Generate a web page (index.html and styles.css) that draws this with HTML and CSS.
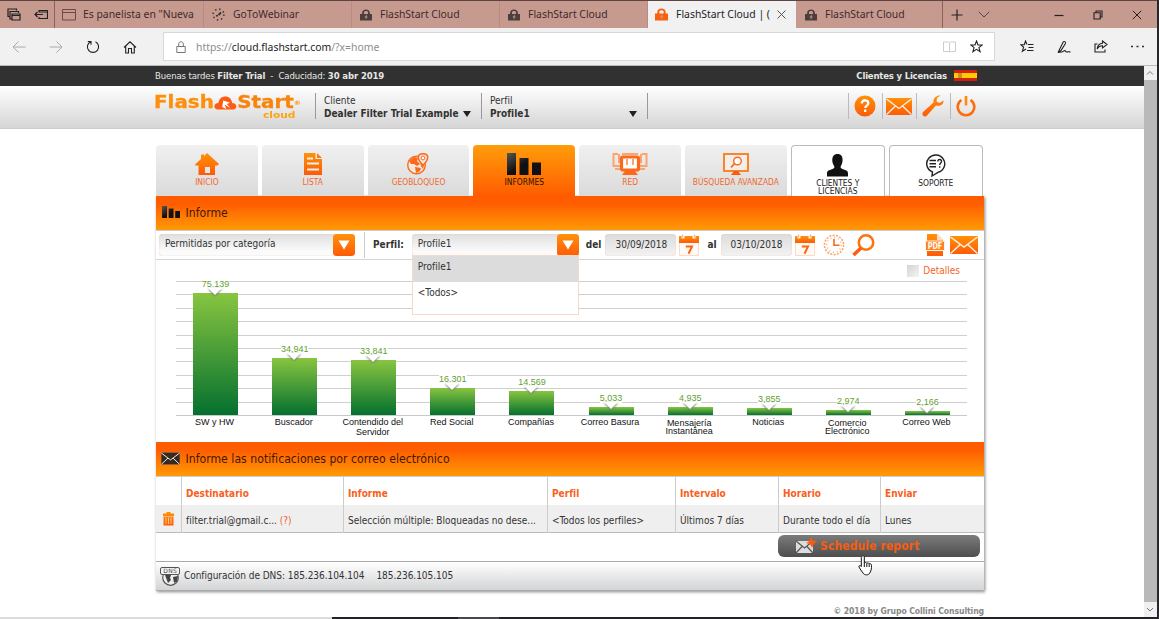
FILE: index.html
```html
<!DOCTYPE html>
<html lang="es">
<head>
  <meta charset="utf-8">
  <title>FlashStart Cloud</title>
  <link rel="stylesheet" href="styles.css">
</head>
<body>
<svg class="defs" width="0" height="0">
  <defs>
    <linearGradient id="og" x1="0" y1="0" x2="0" y2="1"><stop offset="0" stop-color="#ff9208"/><stop offset="1" stop-color="#fd5b08"/></linearGradient>
    <linearGradient id="bk" x1="0" y1="0" x2="1" y2="1"><stop offset="0" stop-color="#555"/><stop offset=".5" stop-color="#111"/><stop offset="1" stop-color="#111"/></linearGradient>
    <symbol id="lock" viewBox="0 0 13 13"><path d="M2.3 5.5V4.2C2.3 1.8 4 .5 6.5.5s4.2 1.3 4.2 3.7v1.3H13V12.500H0v-7zM4.300 5.500h4.400V4.200C8.700 3 8 2.300 6.500 2.300S4.300 3 4.300 4.200z"/><path d="M7.500 6 4.800 9h1.600l-.5 2.500L8.500 8.500H7z" class="bolt"/></symbol>
    <symbol id="mail" viewBox="0 0 26 17"><rect width="26" height="17" rx=".5"/><path d="M.5 1 13 10.500 25.500 1M.5 16.500 9.500 8M25.500 16.500 16.500 8" fill="none" class="fold"/></symbol>
    <symbol id="cal" viewBox="0 0 20 22"><path d="M0 2h2.500v2.500h3V2h8v2.500h3V2H20v7H0z" fill="url(#og)"/><path d="M3.500.5v3M15.500.5v3" stroke="#ffb98e" stroke-width="1.500"/><path d="M.5 9v12.500h19V9" fill="#fffaf6" stroke="#ffd9c2"/><path d="M6.800 12.500h6.200L9.500 19.800" fill="none" stroke="#fb6410" stroke-width="2"/></symbol>
    <symbol id="drop" viewBox="0 0 22 22"><rect width="22" height="22" rx="3.500" fill="url(#og)"/><path d="M5.500 6.500h11L11 15.500z" fill="#fff"/></symbol>
  </defs>
</svg>

<div class="browser">
  <div class="tabbar">
    <div class="tabtools">
      <svg width="14" height="13" viewBox="0 0 14 13"><path d="M2.500 8.500H1v-7.500h8.500v1.500M4.500 11H3V3.500h8.500V5M5 6h8v6H5zM5 7.500h8" fill="none" stroke="#222" stroke-width="1.200"/></svg>
      <svg width="14" height="11" viewBox="0 0 14 11"><path d="M5 3V1.500h8.500v8H5V8M4.500 3h9M9 5.500H1M3.500 3 1 5.500 3.500 8" fill="none" stroke="#222" stroke-width="1.200"/></svg>
    </div>
    <div class="tab first">
      <svg width="14" height="12" viewBox="0 0 14 12"><path d="M.5.5h13v10.500H.5zM.5 3.500h13" fill="none" stroke="#6a4a45"/></svg>
      <span>Es panelista en "Nueva</span>
    </div>
    <div class="tab">
      <svg width="13" height="13" viewBox="0 0 13 13"><path d="M6.500 7 9 4.500M6 7.500l-2 .5" stroke="#333" stroke-width="1.800"/><circle cx="6.500" cy="6.500" r="5.400" fill="none" stroke="#4a3a38" stroke-width="1.600" stroke-dasharray="1.500 2.740"/></svg>
      <span>GoToWebinar</span>
    </div>
    <div class="tab"><svg class="lk" width="12" height="12"><use href="#lock"/></svg><span>FlashStart Cloud</span></div>
    <div class="tab"><svg class="lk" width="12" height="12"><use href="#lock"/></svg><span>FlashStart Cloud</span></div>
    <div class="tab active"><svg class="lk" width="13" height="13"><use href="#lock"/></svg><span>FlashStart Cloud | (</span>
      <svg class="x" width="9" height="9" viewBox="0 0 9 9"><path d="m.5.5 8 8m0-8-8 8" stroke="#555"/></svg></div>
    <div class="tab last"><svg class="lk" width="12" height="12"><use href="#lock"/></svg><span>FlashStart Cloud</span></div>
    <div class="newtab">
      <svg width="12" height="12" viewBox="0 0 12 12"><path d="M6 .5v11M.5 6h11" stroke="#222" stroke-width="1.200"/></svg>
      <svg width="12" height="7" viewBox="0 0 12 7"><path d="m.8.8 5.200 5.200 5.200-5.200" fill="none" stroke="#5b403c"/></svg>
    </div>
    <div class="winbtns">
      <svg width="10" height="10" viewBox="0 0 10 10"><path d="M.5 5.500h9" stroke="#222" stroke-width="1.200"/></svg>
      <svg width="10" height="10" viewBox="0 0 10 10"><path d="M1 2.800h6.200V9H1zM3 2.500V1h6v6H7.500" fill="none" stroke="#222" stroke-width="1.100"/></svg>
      <svg width="10" height="10" viewBox="0 0 10 10"><path d="m.8.8 8.400 8.400m0-8.400L.8 9.200" stroke="#222"/></svg>
    </div>
  </div>

  <div class="navbar">
    <div class="navbtns">
      <svg width="14" height="14" viewBox="0 0 14 14"><path d="M13.500 7H1M6.500 1.500 1 7l5.500 5.500" fill="none" stroke="#aaa"/></svg>
      <svg width="14" height="14" viewBox="0 0 14 14"><path d="M.5 7H13M7.500 1.500 13 7l-5.500 5.500" fill="none" stroke="#aaa"/></svg>
      <svg width="14" height="14" viewBox="0 0 14 14"><path d="M9.500 1.800A5.600 5.600 0 1 1 4.500 1.800M1.800 1.500h3.200v3.300" fill="none" stroke="#222" stroke-width="1.100"/></svg>
      <svg width="14" height="14" viewBox="0 0 14 14"><path d="M1 7.500 7 1.800l6 5.700M2.700 6v7h2.800V8.500h3V13h2.800V6" fill="none" stroke="#222" stroke-width="1.100"/></svg>
    </div>
    <div class="address">
      <svg width="10" height="12" viewBox="0 0 10 12"><path d="M.8 5.500h8.400v6H.8zM2.700 5.500v-2.500C2.700 0 7.300 0 7.300 3v2.500" fill="none" stroke="#777"/></svg>
      <span class="url">https://<b>cloud.flashstart.com</b>/?x=home</span>
      <svg class="book" width="13" height="12" viewBox="0 0 13 12"><path d="M.5 1h5l1 .8 1-.8h5v9.500h-5l-1 .8-1-.8h-5zM6.500 2v9" fill="none" stroke="#ccc"/></svg>
      <svg width="13" height="13" viewBox="0 0 13 13"><path d="m6.500 1 1.500 4h4.200L8.900 7.600l1.200 4.100-3.600-2.400-3.600 2.400 1.200-4.100L.8 5H5z" fill="none" stroke="#222" stroke-width="1.100"/></svg>
    </div>
    <div class="navtools">
      <svg width="14" height="13" viewBox="0 0 14 13"><path d="M8 4.500h5.500M8.500 7.500h5M7 10.500h6.500M7 4.500 5.500 1 4.300 4.700H.8l2.800 2.500-1.200 4L6 9" fill="none" stroke="#222" stroke-width="1.100"/></svg>
      <svg width="14" height="14" viewBox="0 0 14 14"><path d="M1 12.500 6 2.500c1-2 3.300-.8 2.300 1.300L4 10.500 1 12.500l3.500-.5c2 .500 2.500-2.500 4-1 .5 1.500 1.500 1 2.500.8.800-.200 1.500.2 2.500.2" fill="none" stroke="#222" stroke-width="1.100"/></svg>
      <svg width="14" height="13" viewBox="0 0 14 13"><path d="M3.500 4H1v8h10V9.500M8.500 1l4.500 3.500L8.500 8V5.800C6 5.800 4.500 6.500 3.200 9 3.500 5.500 5.500 3.300 8.500 3.200z" fill="none" stroke="#222" stroke-width="1.100"/></svg>
      <svg width="13" height="3" viewBox="0 0 13 3"><path d="M0 1.500h2M5.500 1.500h2M11 1.500h2" stroke="#333" stroke-width="1.400"/></svg>
    </div>
  </div>

  <div class="viewport">
    <div class="page">
      <div class="topline">
        <div class="wrap">
          <span class="welcome">Buenas tardes <b>Filter Trial</b> &nbsp;-&nbsp; Caducidad: <b>30 abr 2019</b></span>
          <b class="cl">Clientes y Licencias</b>
          <span class="flag"><i></i></span>
        </div>
      </div>
      <div class="header">
        <div class="wrap">
          <div class="logo">
            <div class="name"><span>Flash</span><svg width="20" height="14" viewBox="0 0 22 14" preserveAspectRatio="none"><path d="M4 13.500C-1 13 0 7 4.500 7 5 2.500 8 .500 11 .500c3.500 0 6 2.500 6.300 6.500C22 7 23 13 18 13.500z" fill="#ff5a12"/><path d="M9 4.500 15.500 6.800 12.500 8l3 4-5.300-3.500L12 13 8 11z" fill="#fff"/></svg><span class="start">Start</span><sup>®</sup></div>
            <div class="sub"><span>cloud</span></div>
          </div>
          <div class="pick client"><span>Cliente</span><b>Dealer Filter Trial Example</b><i></i></div>
          <div class="pick profile"><span>Perfil</span><b>Profile1</b><i></i></div>
          <div class="hicons">
            <div><svg width="22" height="22" viewBox="0 0 22 22"><circle cx="11" cy="11" r="10.500" fill="url(#og)"/><path d="M7.800 8.500c0-4.500 6.500-4 6.500-.3 0 2.500-3 2.300-3 4.800M11.200 14.600v2.400" fill="none" stroke="#fff" stroke-width="2.300"/></svg></div>
            <div><svg class="mail" width="26" height="17"><use href="#mail"/></svg></div>
            <div><svg width="22" height="22" viewBox="0 0 22 22"><path d="M21.500 5.500 17.500 8 14.500 6.500 15 3 18.500.5C15 0 11 2.500 11.500 7.500L1 17c-2 2.500 1 6 3.500 4L14 10.500c4.500 1 8-1.500 7.500-5z" fill="url(#og)"/></svg></div>
            <div><svg width="20" height="22" viewBox="0 0 20 22"><path d="M5.500 5a8.300 8.300 0 1 0 9 0" fill="none" stroke="#fd6d0b" stroke-width="2.600"/><path d="M8.700 1h2.600v9.500H8.700z" fill="#ff8a10"/></svg></div>
          </div>
        </div>
      </div>

      <div class="main">
        <div class="menu">
          <div class="item"><svg width="24" height="23" viewBox="0 0 24 23"><path d="M12 0 24 11l-1.500 1.500H20V22H3.500v-9.500H0L.5 11 6 6V1.500h3V3zM10 14v6h5v-6z" fill="url(#og)" fill-rule="evenodd"/></svg><span>INICIO</span></div>
          <div class="item"><svg width="18" height="23" viewBox="0 0 18 23"><path d="M0 0h11.500v6H18v16H0z" fill="url(#og)"/><path d="m13 0 5 5h-5z" fill="#fd7a1a"/><path d="M3 5.500h6M3 10.500h12M3 16.500h12" stroke="#eee" stroke-width="2"/></svg><span>LISTA</span></div>
          <div class="item"><svg width="22" height="23" viewBox="0 0 22 23"><circle cx="9.500" cy="12" r="8.800" fill="#f3e7df" stroke="#fb6a1c" stroke-width="1.400"/><path d="M2 8 7 4l4 1-1 3 3 3-3 2-3-2H4zM8 14l6 1-1 3-4 2zM13 10l4 2-1 4-2-3z" fill="#fb6a1c"/><path d="M16 .7c6 0 6.500 5 0 11.500C9.500 5.700 10 .700 16 .700z" fill="#f3e7df" stroke="#fb6a1c" stroke-width="1.500"/><circle cx="16" cy="5" r="1.900" fill="#fff" stroke="#fb6a1c"/></svg><span>GEOBLOQUEO</span></div>
          <div class="item on"><svg width="34" height="23" viewBox="0 0 34 23"><path d="M0 0h9v22H0zM12.500 5h9v17h-9zM25 9.500h9V22h-9z" fill="url(#bk)"/></svg><span>INFORMES</span></div>
          <div class="item"><svg width="36" height="23" viewBox="0 0 36 23"><path d="M6 1H1.500v12H8M30 1h4.500v12H28M7 1v9M29 1v9M3 16h7M26 16h7M10 1h16" fill="none" stroke="#fba46e" stroke-width="2"/><rect x="9.500" y="4" width="17" height="13" rx="1.500" fill="#fff" stroke="#fb6a1c" stroke-width="3.200"/><path d="M15 6v6M21 6v6" stroke="#fba46e" stroke-width="2"/><path d="M13 18h10l3 4H10z" fill="#fb6a1c"/></svg><span>RED</span></div>
          <div class="item"><svg width="26" height="23" viewBox="0 0 26 23"><rect x="1" y="1" width="24" height="17" fill="#f3eee9" stroke="#fb8426" stroke-width="2"/><circle cx="14.500" cy="8" r="3.800" fill="#fff" stroke="#fb6a1c" stroke-width="1.400"/><path d="m11.500 10.500-3.500 4" stroke="#fb6a1c" stroke-width="1.800"/><path d="M11 18h4l3 4H8z" fill="#fb5a10"/></svg><span>BÚSQUEDA AVANZADA</span></div>
          <div class="item white"><svg width="21" height="24" viewBox="0 0 21 24"><path d="M10.500 0C14 0 16 2.500 15.500 7 15.300 10 14 11 13.500 13c.5 3 7.500 2 7.500 6v3.500H0V19c0-4 7-3 7.500-6C7 11 5.500 10 5.300 7 5 2.500 7 0 10.500 0z" fill="#111"/></svg><span>CLIENTES Y LICENCIAS</span></div>
          <div class="item white"><svg width="21" height="24" viewBox="0 0 21 24"><path d="M7.500 18A9 8.800 0 1 1 13 18.300L7 22z" fill="#fff" stroke="#222" stroke-width="1.400"/><path d="M4.500 6.500H11M4.500 9.700H11M4.500 12.800H11M12.800 7.500c0-3 4-2.500 3.700 0-.2 1.500-1.800 1.500-1.800 3.500M14.700 12.300v1.500" fill="none" stroke="#222" stroke-width="1.400"/></svg><span>SOPORTE</span></div>
        </div>

        <div class="panel">
          <div class="title"><svg width="18" height="13" viewBox="0 0 18 13"><path d="M0 0h5v12H0zM6.700 2.500h4.800V12H6.700zM13.200 5H18v7h-4.800z" fill="url(#bk)"/></svg><span>Informe</span></div>

          <div class="filters">
            <div class="select category"><span>Permitidas por categoría</span><svg width="22" height="22"><use href="#drop"/></svg></div>
            <div class="fprofile">
              <b>Perfil:</b>
              <div class="select prof"><span>Profile1</span><svg width="22" height="22"><use href="#drop"/></svg>
                <ul class="options"><li class="sel">Profile1</li><li>&lt;Todos&gt;</li></ul>
              </div>
            </div>
            <b class="del">del</b><span class="date">30/09/2018</span><svg width="20" height="22"><use href="#cal"/></svg>
            <b class="al">al</b><span class="date">03/10/2018</span><svg width="20" height="22"><use href="#cal"/></svg>
            <svg class="clock" width="22" height="22" viewBox="0 0 22 22"><circle cx="11" cy="11" r="9.600" fill="none" stroke="#fca468" stroke-width="1.600" stroke-dasharray="2 1.350"/><circle cx="11" cy="11" r="7.300" fill="none" stroke="#fcb283" stroke-width="1.500" stroke-dasharray="1 2.820"/><path d="M11 5v6.200h5.500" fill="none" stroke="#f86a14" stroke-width="1.600"/></svg>
            <svg class="lens" width="23" height="22" viewBox="0 0 23 22"><circle cx="14" cy="8.500" r="7.200" fill="#fff" stroke="#fc7410" stroke-width="2.600"/><path d="m9 14-7.500 7" stroke="#fb5f0c" stroke-width="3.600"/></svg>
            <svg class="pdf" width="20" height="22" viewBox="0 0 20 22"><path d="M2 0h10l6 6v16H2z" fill="url(#og)"/><path d="M12 0v6h6z" fill="#ffe0c4"/><rect x=".5" y="7" width="19" height="9.500" fill="#ff8421" stroke="#fff2e6"/><text x="2.700" y="15" textLength="14.500" lengthAdjust="spacingAndGlyphs">PDF</text></svg>
            <svg class="mail" width="28" height="18" viewBox="0 0 26 17" preserveAspectRatio="none"><use href="#mail" width="26" height="17"/></svg>
          </div>

          <div class="chart">
            <label class="details"><i></i>Detalles</label>
            <div class="plot">
              <div class="col"><em>75.139</em><div class="bar" style="height:122px"></div></div>
              <div class="col"><em>34,941</em><div class="bar" style="height:57px"></div></div>
              <div class="col"><em>33,841</em><div class="bar" style="height:55px"></div></div>
              <div class="col"><em>16.301</em><div class="bar" style="height:27px"></div></div>
              <div class="col"><em>14.569</em><div class="bar" style="height:24px"></div></div>
              <div class="col"><em>5,033</em><div class="bar" style="height:8px"></div></div>
              <div class="col"><em>4,935</em><div class="bar" style="height:8px"></div></div>
              <div class="col"><em>3,855</em><div class="bar" style="height:7px"></div></div>
              <div class="col"><em>2,974</em><div class="bar" style="height:5px"></div></div>
              <div class="col"><em>2,166</em><div class="bar" style="height:4px"></div></div>
            </div>
            <div class="labels">
              <span>SW y HW</span><span>Buscador</span><span>Contendido del<br>Servidor</span><span>Red Social</span><span>Compañías</span><span>Correo Basura</span><span class="tight">Mensajería<br>Instantánea</span><span>Noticias</span><span class="tight">Comercio<br>Electrónico</span><span>Correo Web</span>
            </div>
          </div>

          <div class="title second"><svg class="dmail" width="19" height="13"><use href="#mail"/></svg><span>Informe las notificaciones por correo electrónico</span></div>

          <div class="grid head"><span></span><b>Destinatario</b><b>Informe</b><b>Perfil</b><b>Intervalo</b><b>Horario</b><b>Enviar</b></div>
          <div class="grid row">
            <span class="trash"><svg width="11" height="14" viewBox="0 0 11 14"><path d="M3.500 0h4v1.500H11V4H0V1.500h3.500zM.5 4.500h10V13.500H.5z" fill="url(#og)"/><path d="M3 5.500v6.500M5.500 5.500v6.500M8 5.500v6.500" stroke="#ffc58a"/></svg></span>
            <span>filter.trial@gmail.c... <a>(?)</a></span><span>Selección múltiple: Bloqueadas no dese...</span><span>&lt;Todos los perfiles&gt;</span><span>Últimos 7 días</span><span>Durante todo el día</span><span>Lunes</span>
          </div>
          <div class="actions">
            <div class="schedule"><svg width="23" height="17" viewBox="0 0 23 17"><rect x="1" y="4" width="17" height="12" fill="#ddd"/><path d="m1 4 8.500 7L18 4M1 16l6-6.500M18 16l-6-6.500" fill="none" stroke="#555" stroke-width="1.200"/><path d="m16 0 1.500 3.500 4.500.5-3 2.500L17 11l-2-4-4-1 3.500-2z" fill="#ff5a0c"/></svg><b>Schedule report</b></div>
            <svg class="hand" width="15" height="21" viewBox="0 0 15 21"><path d="M4.500 1C5.500.500 6.300 1 6.300 2v6c.8-.8 2-.6 2.500.3.800-.7 2-.4 2.400.5 1-.5 2.300.2 2.300 1.500 0 3 0 5-1.700 7.700C10.500 20.500 6.500 20.500 5 18 3.500 16 2 14 1 12c-.5-1.500 1.300-2 2.300-.5V2.500c0-.8.500-1.200 1.200-1.500z" fill="#fff" stroke="#111"/><path d="M6.300 8v4M8.800 8.500V12M11.200 9v3" stroke="#111"/></svg>
          </div>
          <div class="dns">
            <svg width="20" height="19" viewBox="0 0 20 19"><circle cx="10.500" cy="10.500" r="7.800" fill="#eee" stroke="#555" stroke-width="1.200"/><path d="m5 8 6 0-1 3 1 2-3 3zM13 10l5-1-1 5-3 2z" fill="#444"/><rect x=".5" y=".5" width="19" height="7" rx="1.500" fill="#f4f4f4" stroke="#555"/><text x="3.300" y="6.300" textLength="13.500">DNS</text></svg>
            <span>Configuración de DNS: 185.236.104.104</span><span class="ip2">185.236.105.105</span>
          </div>
        </div>
        <div class="copy">© 2018 by Grupo Collini Consulting</div>
      </div>
    </div>
    <div class="scrollbar">
      <svg width="12" height="14" viewBox="0 0 12 14"><path d="m3 8.500 3-3 3 3" fill="none" stroke="#777"/></svg>
      <div class="thumb"></div>
      <svg width="12" height="15" viewBox="0 0 12 15"><path d="m3 6 3 3 3-3" fill="none" stroke="#777"/></svg>
    </div>
  </div>
  <div class="taskbar"><i></i><i></i></div>
</div>
</body>
</html>
```
FILE: styles.css
```css
* { box-sizing: border-box; }
body {
  margin: 0;
  font-family: "DejaVu Sans Condensed", "DejaVu Sans", sans-serif;
  font-stretch: condensed;
  font-size: 10px;
  color: #333;
}
svg { display: block; flex: none; }
.defs { position: absolute; }
i, em { font-style: normal; }

.browser {
  width: 1159px;
  height: 619px;
  display: flex;
  flex-direction: column;
  overflow: hidden;
  background: #f1f1f1;
  border-right: 2px solid #26262b;
}

/* browser tabs */
.tabbar {
  height: 28px;
  flex: none;
  display: flex;
  background: #c79a90;
  border-top: 1px solid #5e4340;
  font: 10.4px "Noto Sans", sans-serif;
  color: #3d2a28;
}
.tabtools { width: 55px; display: flex; align-items: center; gap: 13px; padding-left: 7px; border-right: 1px solid #8a625b; }
.tab { width: 148px; display: flex; align-items: center; padding-left: 8px; border-right: 1px solid #b98b82; white-space: nowrap; }
.tab svg + span { margin: 0 0 1px 8px; }
.tab.first { width: 149px; padding-left: 7px; }
.tab.first svg + span { margin-left: 7px; }
.tab .lk { fill: #4c3e3c; }
.bolt { fill: #c79a90; }
.tab.active { background: #f1f1f1; border: 0; color: #222; padding-left: 7px; }
.tab.active .lk { fill: #f9600c; }
.tab.active .bolt { fill: #fff; }
.tab.active .x { margin: 0 10px 0 auto; }
.tab.last { width: 147px; border-color: #8a625b; padding-left: 9px; }
.newtab { display: flex; align-items: center; gap: 15px; padding-left: 8px; }
.winbtns { display: flex; align-items: center; gap: 29px; margin-left: auto; padding-right: 15px; }

/* address bar */
.navbar { height: 38px; flex: none; display: flex; align-items: center; background: #f1f1f1; border-bottom: 1px solid #bbb; }
.navbtns { width: 163px; display: flex; gap: 23px; padding-left: 12px; }
.address { width: 832px; height: 29px; display: flex; align-items: center; background: #fff; border: 1px solid #d8d8d8; padding: 0 11px 0 12px; }
.url { margin-left: 10px; font: 10.4px "Noto Sans", sans-serif; color: #8d8d8d; }
.url b { font-weight: normal; color: #222; }
.book { margin: 0 14px 0 auto; }
.navtools { display: flex; align-items: center; gap: 23px; padding-left: 25px; }

.viewport { flex: 1; display: flex; min-height: 0; }
.page { width: 1144px; background: #fff; }
.wrap { width: 829px; margin-left: 154px; display: flex; }
.scrollbar { width: 13px; display: flex; flex-direction: column; background: #f0f0f0; }
.thumb { flex: 1; background: #b9b9b9; }
.taskbar { height: 2px; flex: none; background: #232227; display: flex; }
.taskbar i:first-child { width: 332px; background: #dcdcdc; }
.taskbar i:last-child { width: 41px; margin-left: 126px; background: #48474c; }

/* page header */
.topline { height: 20px; background: #313131; color: #e6e6e6; }
.topline .wrap { height: 20px; align-items: center; padding-bottom: 1px; font-size: 9.5px; }
.welcome { padding-left: 1px; letter-spacing: -.13px; }
.cl { margin-left: auto; letter-spacing: -.2px; }
.flag { width: 23px; height: 11px; margin: 0 6px 0 7px; background: linear-gradient(#d21f12 25%, #fc0 25%, #fc0 75%, #d21f12 75%); }
.flag i { display: block; width: 4px; height: 5px; margin: 3px 0 0 4px; background: #d98b1c; }
.header { height: 43px; background: linear-gradient(#fff, #d5d5d5); border-bottom: 1px solid #ccc; }
.logo { width: 161px; flex: none; padding-top: 8px; }
.name { display: flex; align-items: center; height: 17px; font: bold 17px/17px "DejaVu Sans", sans-serif; color: #fd8f0c; -webkit-text-stroke: .3px; transform: scaleX(1.17); transform-origin: 0 0; }
.name .start { color: #f9840c; }
.name sup { font-size: 6px; -webkit-text-stroke: 0; }
.sub { font: bold 9px/9px "DejaVu Sans", sans-serif; padding-left: 109px; color: #fda40c; }
.sub span { display: inline-block; transform: scaleX(1.18); transform-origin: 0 0; }
.pick { height: 26px; flex: none; margin-top: 7px; border-left: 1px solid #999; padding: 2px 0 0 8px; display: grid; grid-template-columns: auto auto; align-content: center; justify-content: start; line-height: 13px; }
.pick span { grid-column: 1 / 3; }
.pick i { align-self: center; border: 4px solid transparent; border-top: 6px solid #222; border-bottom: 0; }
.client { width: 166px; column-gap: 4px; }
.profile { width: 167px; justify-content: space-between; padding-right: 10px; border-right: 1px solid #999; }
.hicons { display: flex; margin: 7px 0 0 200px; }
.hicons div { width: 34px; flex: none; height: 26px; display: flex; align-items: center; padding-left: 5px; border-left: 1px solid #bbb; }
.hicons div:nth-child(2) { padding-left: 3px; }
.mail { fill: url(#og); }
.fold { stroke: #fff1e4; stroke-width: 1.300; }

/* main menu */
.main { width: 828px; margin: 16px 0 0 156px; }
.menu { display: flex; gap: 4px; height: 51px; }
.item {
  width: 101.800px;
  display: flex;
  flex-direction: column;
  align-items: center;
  padding-top: 8px;
  border-radius: 4px 4px 0 0;
  background: linear-gradient(#f0f0f0, #dadada);
  color: #ef6a2c;
  font-size: 8.400px;
  line-height: 8px;
  text-align: center;
}
.item span { margin-top: 2px; white-space: nowrap; }
.item.on { background: linear-gradient(#ff9d0a, #ff5c00); color: #2b1200; }
.item.white { width: 94px; background: #fff; border: 1px solid #bbb; border-bottom: 0; color: #222; }
.item.white span { white-space: normal; width: 60px; margin-top: 1px; }

.panel { box-shadow: 1px 1px 3px #888; background: #fff; }
.title { height: 35px; display: flex; align-items: center; padding: 0 0 1px 6px; background: linear-gradient(#ff5a00, #ff5f00 25%, #ff9a06); border-bottom: 1px solid #ccc; font-size: 12.100px; color: #431800; }
.title span { margin-left: 5.500px; letter-spacing: .03px; }
.title.second { padding-left: 5px; }
.dmail { fill: #352a22; }
.dmail .fold, .dmail { stroke: #b97a45; }

/* report filters */
.filters { height: 29px; display: flex; align-items: center; padding: 0 0 1px 3px; border-bottom: 1px solid #d5d5d5; }
.select { height: 22px; display: flex; justify-content: space-between; align-items: center; position: relative; border-radius: 4px; padding-left: 6px; background: linear-gradient(#dfdfdf, #fbfbfb 80%); box-shadow: inset 0 0 1px #f7a67d; }
.select > span { margin-bottom: 2px; }
.category { width: 196px; }
.fprofile { height: 26px; display: flex; align-items: center; margin-left: 9px; padding-left: 8px; border-left: 1px solid #ccc; }
.prof { width: 167px; margin-left: 8px; }
.options { position: absolute; left: 0; top: 21px; z-index: 2; width: 167px; height: 60px; margin: 0; padding: 0; list-style: none; background: #fff; border: 1px solid #f8d9c8; }
.options li { height: 26px; line-height: 22px; padding-left: 5px; }
.options .sel { background: #dcdcdc; }
.del { margin: 0 4px 0 7px; }
.al { margin: 0 4px 0 8px; }
.date { width: 71px; height: 22px; line-height: 22px; margin-right: 3px; padding-left: 10px; border-radius: 4px; background: linear-gradient(#dcdcdc, #f3f3f3); box-shadow: inset 0 0 1px #f7a67d; }
.clock { margin-left: 8px; }
.lens { margin-left: 7px; }
.pdf { margin-left: auto; }
.pdf text { font: bold 8px "DejaVu Sans", sans-serif; fill: #fff; }
.pdf + .mail { margin: 0 6px 0 5px; }

/* chart */
.chart { height: 182px; }
.details { height: 21px; display: flex; align-items: center; justify-content: flex-end; padding-right: 24px; color: #f36527; }
.details i { width: 12px; height: 12px; margin-right: 4px; background: linear-gradient(135deg, #d4d4d4, #f4f4f4); }
.plot {
  height: 135px;
  margin: 0 17px 0 20px;
  display: grid;
  grid-template-columns: repeat(10, 1fr);
  border-bottom: 1px solid #c9c9c9;
  background: repeating-linear-gradient(to top, transparent 0 12.400px, #cfcfcf 12.400px 13.400px);
}
.col { display: flex; flex-direction: column; justify-content: flex-end; align-items: center; height: 134px; font: 9px "Liberation Sans", Arial, sans-serif; color: #62a030; }
.col em { line-height: 9px; margin-bottom: 4px; background: #fff; }
.bar { width: 45px; flex: none; position: relative; background: linear-gradient(#88c540, #04702f); }
.bar::before { content: ""; position: absolute; left: 15px; top: -5px; border: 7.500px solid transparent; border-top: 7px solid #fff; border-bottom: 0; filter: drop-shadow(0 1px 1px #777); }
.labels { display: grid; grid-template-columns: repeat(10, 1fr); margin: 1px 18px 0 19px; text-align: center; font: 9px/10px "Liberation Sans", Arial, sans-serif; color: #111; }
.labels .tight { line-height: 8px; padding-top: 2px; }

/* notifications */
.grid { display: grid; grid-template-columns: 26px 162px 204px 128px 103px 102px 103px; height: 28px; align-items: stretch; }
.grid > * { border-right: 1px solid #ccc; padding: 3px 0 0 4px; line-height: 25px; white-space: nowrap; }
.grid > :last-child { border: 0; }
.head { color: #f9601a; }
.grid.head > * { padding-top: 4px; }
.row { background: #efefef; border-bottom: 1px solid #bbb; }
.grid .trash { padding: 7px 0 0 7px; }
.row a { color: #f1622a; }
.actions { height: 29px; display: flex; justify-content: flex-end; padding: 2px 4px 0 0; position: relative; border-bottom: 1px solid #aaa; }
.schedule { width: 202px; height: 22px; display: flex; align-items: center; border-radius: 6px; padding: 0 0 1px 17px; background: linear-gradient(#7b7b7b, #4e4e4e); font-size: 12px; letter-spacing: .12px; color: #f85c10; }
.schedule b { margin-left: 2px; }
.hand { position: absolute; left: 702px; top: 22px; z-index: 3; }
.dns { height: 29px; display: flex; align-items: center; padding-left: 4px; background: linear-gradient(#fff, #d3d4d5); border-bottom: 1px solid #aaa; }
.dns text { font: 6px "DejaVu Sans", sans-serif; fill: #444; }
.dns span { margin: 0 0 2px 4px; letter-spacing: -.04px; }
.dns .ip2 { margin-left: 12px; }
.copy { margin-top: 15px; text-align: right; font-size: 8.600px; letter-spacing: -.09px; font-weight: bold; color: #888; }
```
